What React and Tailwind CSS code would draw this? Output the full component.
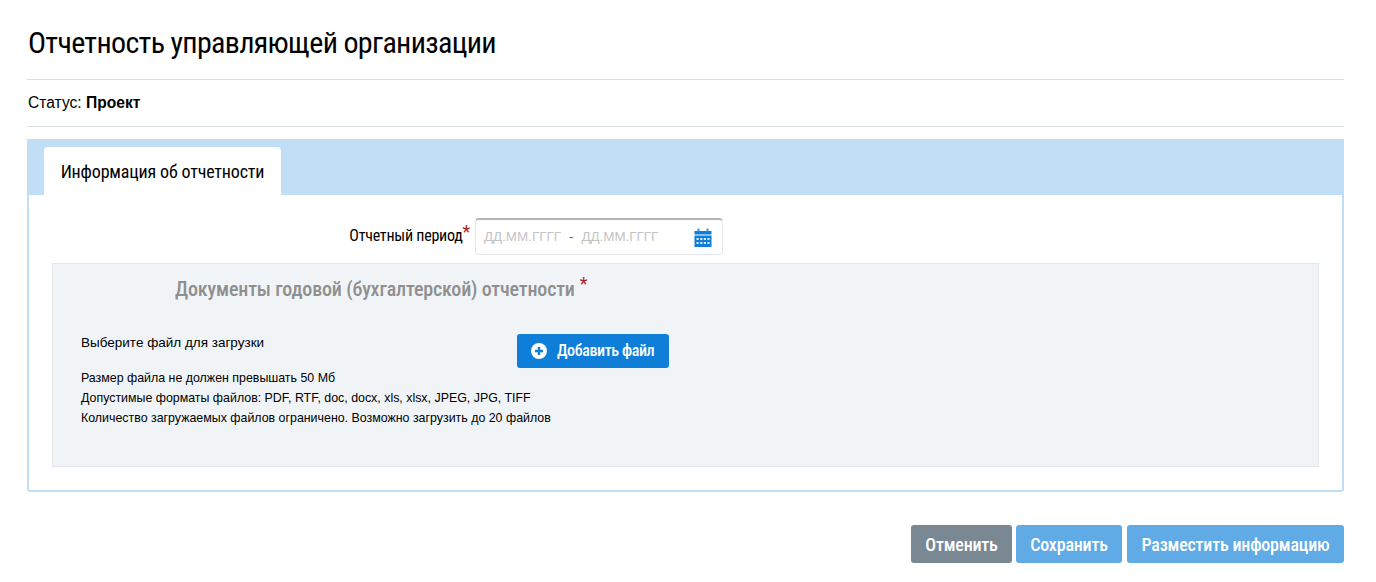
import React from "react";

const condensed = "font-['Roboto_Condensed','Roboto',sans-serif] [font-stretch:75%]";

const CalendarIcon = () => (
  <svg width="18" height="19" viewBox="0 0 18 19">
    <path d="M0.5 3h17v3.5h-17z" fill="#0f7ed8" />
    <rect x="3.5" y="0.5" width="2" height="3" fill="#2a9be8" />
    <rect x="12.5" y="0.5" width="2" height="3" fill="#2a9be8" />
    <rect x="0.5" y="7.5" width="17" height="11.5" fill="#0f7ed8" />
    <path
      d="M2.5 10h2.2v2h-2.2zM6.2 10h2.2v2H6.2zM9.8 10H12v2H9.8zM13.4 10h2.2v2h-2.2zM2.5 14h2.2v2h-2.2zM6.2 14h2.2v2H6.2zM9.8 14H12v2H9.8zM13.4 14h2.2v2h-2.2z"
      fill="#d6eaf9"
    />
  </svg>
);

const PlusIcon = () => (
  <svg width="16" height="16" viewBox="0 0 16 16">
    <circle cx="8" cy="8" r="8" fill="#fff" />
    <path d="M8 4v8M4 8h8" stroke="#0f7ed8" strokeWidth="2.4" />
  </svg>
);

export default function App() {
  return (
    <div className="bg-white min-h-[582px] pl-[27px] pr-[32px] pt-[24px] font-['Liberation_Sans',Arial,sans-serif] text-black">
      <h1 className={`${condensed} text-[30px] tracking-[-0.68px] leading-[38px] pl-px pb-[17px] border-b border-[#d8dde3]`}>
        Отчетность управляющей организации
      </h1>

      <div className="h-[47px] flex items-center pl-px text-[15.6px] border-b border-[#d8dde3]">
        <span>
          Статус: <b>Проект</b>
        </span>
      </div>

      <div className="mt-[12px] h-[353px] border-2 border-t-0 border-[#c0dff7] rounded-b-[3px]">
        <div className="h-[56px] -mx-[2px] bg-[#c0dff7] pl-[17px] pt-[8px] flex">
          <div className={`${condensed} w-[237px] h-[48px] bg-white rounded-t-[4px] flex items-center justify-center text-[18px] tracking-[-0.16px]`}>
            Информация об отчетности
          </div>
        </div>

        <div className="pl-[23px] pr-[23px] pt-[23px]">
          <div className="flex items-center h-[37px]">
            <div className={`${condensed} w-[423px] text-right text-[16px] tracking-[-0.25px] pr-[5px] -mt-[2px]`}>
              Отчетный период<span className="text-[#a81f2d] text-[18px] leading-none align-[3px]">*</span>
            </div>
            <div className="w-[248px] h-[37px] border border-[#e3e7ec] border-t-2 border-t-[#b5b5b5] rounded-[4px] flex items-center pl-[8px] pr-[10px] text-[13.4px] text-[#c4c4c4]">
              <span>ДД.ММ.ГГГГ</span>
              <span className="mx-[8px] text-[#666]">-</span>
              <span>ДД.ММ.ГГГГ</span>
              <span className="ml-auto flex"><CalendarIcon /></span>
            </div>
          </div>

          <div className="mt-[8px] h-[204px] bg-[#f0f4f7] border border-[#e4e8ec] pl-[28px]">
            <div className={`${condensed} pl-[94px] pt-[11px] text-[20px] tracking-[-0.16px] leading-[28px] font-medium text-[#8f8f8f]`}>
              Документы годовой (бухгалтерской) отчетности
              <span className="ml-[5px] text-[#a81f2d] text-[18px] leading-none font-normal align-[6px]">*</span>
            </div>

            <div className="mt-[31px] flex items-start">
              <div className="w-[436px] text-[13.5px] leading-[16px] pt-[1px]">Выберите файл для загрузки</div>
              <button className={`${condensed} w-[152px] h-[34px] bg-[#0f7ed8] rounded-[3px] text-white text-[16px] tracking-[-0.4px] font-medium flex items-center pl-[14px] gap-[10px]`}>
                <PlusIcon />
                Добавить файл
              </button>
            </div>

            <div className="mt-0 text-[12.4px] leading-[20px]">
              <div>Размер файла не должен превышать 50 Мб</div>
              <div>Допустимые форматы файлов: PDF, RTF, doc, docx, xls, xlsx, JPEG, JPG, TIFF</div>
              <div>Количество загружаемых файлов ограничено. Возможно загрузить до 20 файлов</div>
            </div>
          </div>
        </div>
      </div>

      <div className={`${condensed} mt-[33px] flex justify-end gap-[4px] text-white text-[18px] tracking-[-0.2px] font-medium`}>
        <button className="w-[101px] h-[38px] rounded-[3px] bg-[#7a8894]">Отменить</button>
        <button className="w-[106px] h-[38px] rounded-[3px] bg-[#60aae5]">Сохранить</button>
        <button className="ml-px w-[217px] h-[38px] rounded-[3px] bg-[#60aae5]">Разместить информацию</button>
      </div>
    </div>
  );
}
